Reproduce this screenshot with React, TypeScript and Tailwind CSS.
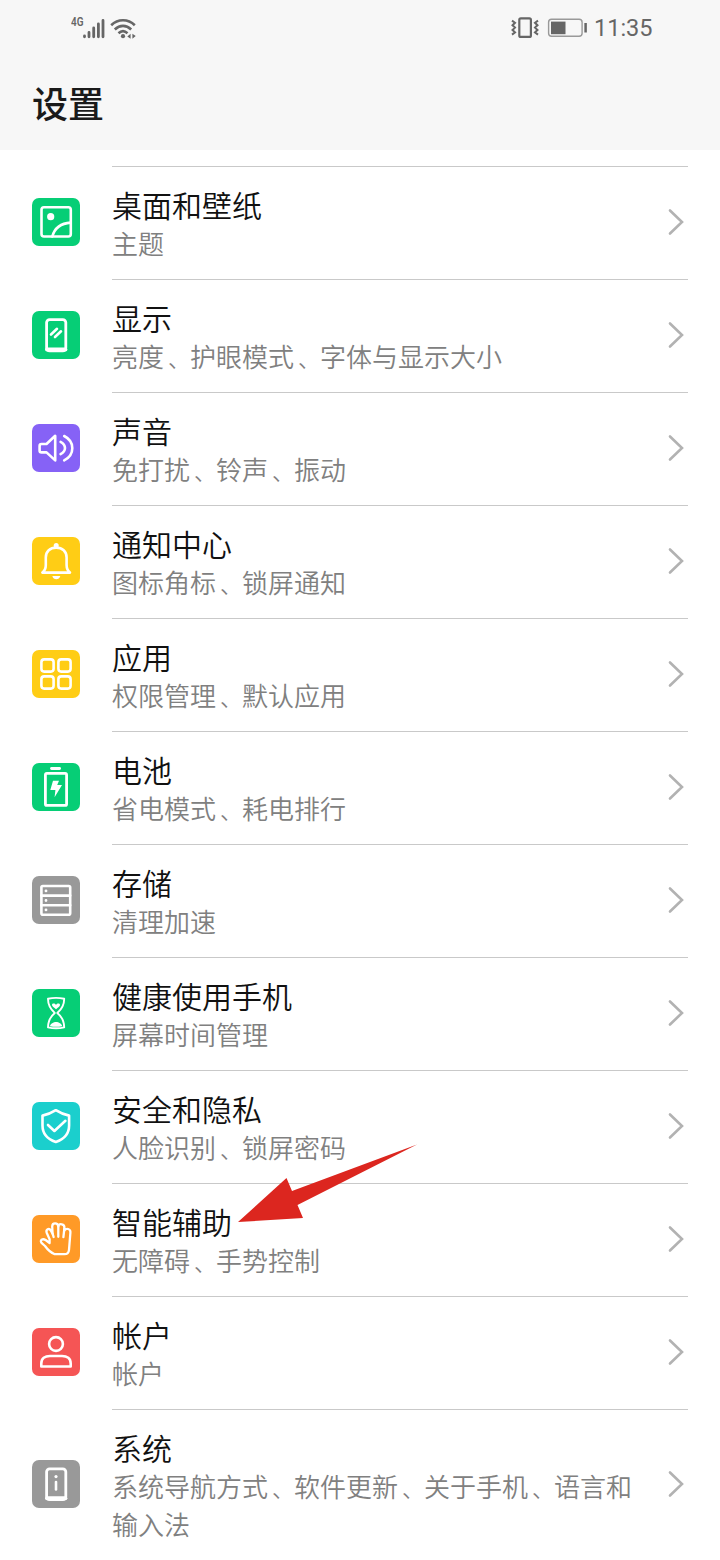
import { Fragment, type ReactNode } from "react";

type Item = {
  title: string;
  desc: string[];
  tile: string;
  icon: ReactNode;
};

const ITEMS: Item[] = [
  {
    title: "桌面和壁纸",
    desc: ["主题"],
    tile: "bg-[#06ce76]",
    icon: (
      <>
        <rect x="9.5" y="9.2" width="29.3" height="29.3" rx="2.5" />
        <circle cx="18.7" cy="18.7" r="3.6" fill="currentColor" stroke="none" />
        <path d="M20.3 38.5C22.5 30.5 29 25.2 38.7 24.6" />
      </>
    ),
  },
  {
    title: "显示",
    desc: ["亮度、护眼模式、字体与显示大小"],
    tile: "bg-[#06ce76]",
    icon: (
      <>
        <rect x="14.6" y="8.6" width="19.2" height="31.2" rx="3" strokeWidth="2.8" />
        <path d="M15 38.5H33.4" strokeWidth="4" />
        <path d="M19 23.5L25 17.8M23 26L29 20.3" strokeWidth="2.6" />
      </>
    ),
  },
  {
    title: "声音",
    desc: ["免打扰、铃声、振动"],
    tile: "bg-[#8662f6]",
    icon: (
      <>
        <path d="M23.2 11.8V36.4L14.5 28.4H9.5Q7.6 28.4 7.6 26.4V22Q7.6 20 9.5 20H14.5Z" />
        <path d="M28.6 17.8Q33 20.3 33 24T28.6 30.2M32.2 12C43 17.5 43 30.8 32.2 36.3" />
      </>
    ),
  },
  {
    title: "通知中心",
    desc: ["图标角标、锁屏通知"],
    tile: "bg-[#ffcd15]",
    icon: (
      <>
        <circle cx="24.2" cy="8.6" r="2.5" fill="currentColor" stroke="none" />
        <path d="M10.4 35.6H38C35.5 33.6 34.6 31.5 34.6 28V20.5C34.6 14.5 30.3 10.6 24.2 10.6S13.8 14.5 13.8 20.5V28C13.8 31.5 12.9 33.6 10.4 35.6Z" />
        <path d="M20.3 39H28.3Q27.2 42.3 24.3 42.3T20.3 39Z" fill="currentColor" stroke="none" />
      </>
    ),
  },
  {
    title: "应用",
    desc: ["权限管理、默认应用"],
    tile: "bg-[#ffcd15]",
    icon: (
      <>
        <rect x="9.4" y="9.4" width="12.2" height="12.2" rx="2.8" />
        <rect x="26.4" y="9.4" width="12.2" height="12.2" rx="2.8" />
        <rect x="9.4" y="26.4" width="12.2" height="12.2" rx="2.8" />
        <rect x="26.4" y="26.4" width="12.2" height="12.2" rx="2.8" />
      </>
    ),
  },
  {
    title: "电池",
    desc: ["省电模式、耗电排行"],
    tile: "bg-[#06ce76]",
    icon: (
      <>
        <path d="M19.5 5.5H27.6" strokeWidth="2.8" />
        <rect x="13.4" y="10.4" width="21.2" height="32" rx="1.5" strokeWidth="2.8" />
        <path d="M21 17.7H27L25.2 22H30L22.6 34.3L23.4 27H18.3Z" fill="currentColor" stroke="none" />
      </>
    ),
  },
  {
    title: "存储",
    desc: ["清理加速"],
    tile: "bg-[#999999]",
    icon: (
      <>
        <rect x="9.4" y="10" width="28.8" height="28.8" rx="1.5" />
        <path d="M9.4 19.6H38.2M9.4 29.2H38.2" />
        <path d="M14 14.8V14.9M14 24.4V24.5M14 33.8V33.9" strokeWidth="2.8" />
      </>
    ),
  },
  {
    title: "健康使用手机",
    desc: ["屏幕时间管理"],
    tile: "bg-[#06ce76]",
    icon: (
      <g strokeWidth="1.9">
        <path d="M16 9.8Q24 8 32.2 9.8C32.2 16.5 29.5 20.5 25.3 24C29.5 27.5 32.2 31.5 32.2 38.4Q24 40.2 16 38.4C16 31.5 18.7 27.5 22.8 24C18.7 20.5 16 16.5 16 9.8Z" />
        <path d="M24 20.2C22 18.7 20 17.4 20 16C20 14.3 22.8 14 24 15.9C25.2 14 28 14.3 28 16C28 17.4 26 18.7 24 20.2ZM18 37.2C18.4 34.8 21.5 33 24.1 33S29.8 34.8 30.2 37.2Q24 38.4 18 37.2Z" fill="currentColor" stroke="none" />
      </g>
    ),
  },
  {
    title: "安全和隐私",
    desc: ["人脸识别、锁屏密码"],
    tile: "bg-[#1bcfcd]",
    icon: (
      <>
        <path d="M23.8 8.2C19.5 11 15.2 12.7 10.5 13.6V23.5C10.5 31.3 15.6 37.2 23.8 40C32 37.2 37.1 31.3 37.1 23.5V13.6C32.4 12.7 28.1 11 23.8 8.2Z" />
        <path d="M16 23L22.4 29L33.4 18.8" />
      </>
    ),
  },
  {
    title: "智能辅助",
    desc: ["无障碍、手势控制"],
    tile: "bg-[#ff9a27]",
    icon: (
      <g strokeWidth="2.3">
        <path d="M22.8 39.2C18.5 37.5 15.5 34.5 13 31L9.8 28.2Q8 26 9.6 24.7Q11.4 23.6 13.6 25L17.6 28V24.2L14.8 18C13.4 14.4 17 12.6 18.9 15.6L20.6 18.6L20.2 11.6C20.2 7.4 25.8 7.4 26.3 11.4C27 8 32.8 8.6 32.4 13L32.2 15.8C34 12.6 38.8 13.6 38.4 17.6L37 34.8Q36.6 39.2 32.6 39.2Z" />
        <path d="M20.6 18.6L21.6 22M26.3 11.4V21.8M32.3 14L31.4 22.2" />
      </g>
    ),
  },
  {
    title: "帐户",
    desc: ["帐户"],
    tile: "bg-[#f55555]",
    icon: (
      <>
        <circle cx="24" cy="16" r="6.9" />
        <path d="M9.3 38.5V35.5C9.3 30.5 13 28 18 28H30C35 28 38.7 30.5 38.7 35.5V38.5Z" />
      </>
    ),
  },
  {
    title: "系统",
    desc: ["系统导航方式、软件更新、关于手机、语言和", "输入法"],
    tile: "bg-[#999999]",
    icon: (
      <>
        <rect x="14.6" y="8.8" width="19.2" height="30.8" rx="3" strokeWidth="2.8" />
        <path d="M15 38.3H33.4" strokeWidth="4" />
        <path d="M24 16.5V16.6" strokeWidth="3.2" />
        <path d="M24 22V29.5" />
      </>
    ),
  },
];

function StatusBar() {
  return (
    <div className="flex h-14 items-center justify-between pr-[68px] pl-[71px] text-[#666]">
      <svg className="h-8 w-[66px]" viewBox="0 0 66 32" fill="none" stroke="currentColor">
        <text x="0" y="14" fontSize="12.5" fontWeight="600" fill="currentColor" stroke="none" textLength="12.5" lengthAdjust="spacingAndGlyphs">
          4G
        </text>
        <g strokeWidth="2.8" strokeLinecap="round">
          <path d="M13.5 24V24.8M18 20.5V24.8M22.7 16V24.8M27.4 12V24.8M32 8.5V24.8" />
        </g>
        <g strokeWidth="2.6">
          <path d="M40.2 13.2C47 6.5 57 6.5 63.8 13.2" />
          <path d="M43.8 17.5C48.8 12.7 55.2 12.7 60.2 17.5" />
          <path d="M47.5 21.2C50.5 18.4 53.5 18.4 56.5 21.2" />
        </g>
        <circle cx="52" cy="24.2" r="2.1" fill="currentColor" stroke="none" />
        <path d="M59.6 21.8V26.8L56.3 24.5ZM61.4 21.8V26.8L64.7 24.1Z" fill="currentColor" stroke="none" />
      </svg>
      <div className="flex items-center">
        <svg className="h-8 w-[77px]" viewBox="0 0 77 32" fill="none" stroke="currentColor">
          <rect x="8.3" y="6.3" width="11.6" height="18.6" rx="1.5" strokeWidth="2.2" />
          <path d="M1 8.6L4 10.8L1.5 13.2L4 15.6L1.5 18L4 20.4L1 22.6M27 8.6L24 10.8L26.5 13.2L24 15.6L26.5 18L24 20.4L27 22.6" strokeWidth="2" />
          <rect x="37.6" y="7.2" width="33.5" height="17" rx="3" stroke="#999" strokeWidth="1.4" />
          <rect x="40" y="9.6" width="14.5" height="12.6" fill="currentColor" stroke="none" />
          <path d="M74.6 11V20.5" strokeWidth="2.5" />
        </svg>
        <span className="ml-[6px] w-[58px] text-[23.5px] leading-8 whitespace-nowrap">11:35</span>
      </div>
    </div>
  );
}

// the enumeration comma sits nearer the middle of its 26px cell
function DescLine({ text }: { text: string }) {
  return (
    <div className="text-[26px] leading-[38px] font-[350] whitespace-nowrap text-[#808080]">
      {text.split("、").map((part, i) => (
        <Fragment key={i}>
          {i > 0 && <span className="ml-1 text-[22px] leading-none">、</span>}
          {part}
        </Fragment>
      ))}
    </div>
  );
}

function Row({ item }: { item: Item }) {
  return (
    <li className="flex items-center px-8">
      <div className={`mr-8 mb-0.5 h-12 w-12 shrink-0 rounded-[7px] text-white ${item.tile}`}>
        <svg
          className="h-12 w-12"
          viewBox="0 0 48 48"
          fill="none"
          stroke="currentColor"
          strokeWidth="2.6"
          strokeLinecap="round"
          strokeLinejoin="round"
        >
          {item.icon}
        </svg>
      </div>
      <div className="flex min-w-0 flex-1 items-center border-t border-[#c9c9c9] pt-5 pb-[15px]">
        <div className="min-w-0 flex-1">
          <div className="text-[30px] leading-[39px] font-[350] text-[#111]">{item.title}</div>
          {item.desc.map((line) => (
            <DescLine key={line} text={line} />
          ))}
        </div>
        <svg className="mr-1 mb-[7px] h-7 w-4 shrink-0" viewBox="0 0 16 28" fill="none" stroke="#b2b2b2" strokeWidth="2.6" strokeLinecap="round">
          <path d="M2 2.5L14 14L2 25.5" />
        </svg>
      </div>
    </li>
  );
}

export default function App() {
  return (
    <div className="relative h-[1560px] w-[720px] overflow-hidden bg-white font-['Roboto','Noto_Sans_CJK_SC',sans-serif]" lang="zh-CN">
      <header className="h-[150px] bg-[#f7f7f7]">
        <StatusBar />
        <h1 className="pt-6 pl-8 text-[36px] leading-[52px] font-medium text-[#1a1a1a]">设置</h1>
      </header>
      <ul className="pt-4">
        {ITEMS.map((item) => (
          <Row key={item.title} item={item} />
        ))}
      </ul>
      {/* red pointer over the list */}
      <svg className="absolute top-[1140px] left-[234px] h-[88px] w-[188px]" viewBox="0 0 188 88">
        <path d="M4 82L52.5 38L58 51L183 4.5L63.5 65L69 78Z" fill="#dc261f" />
      </svg>
    </div>
  );
}
